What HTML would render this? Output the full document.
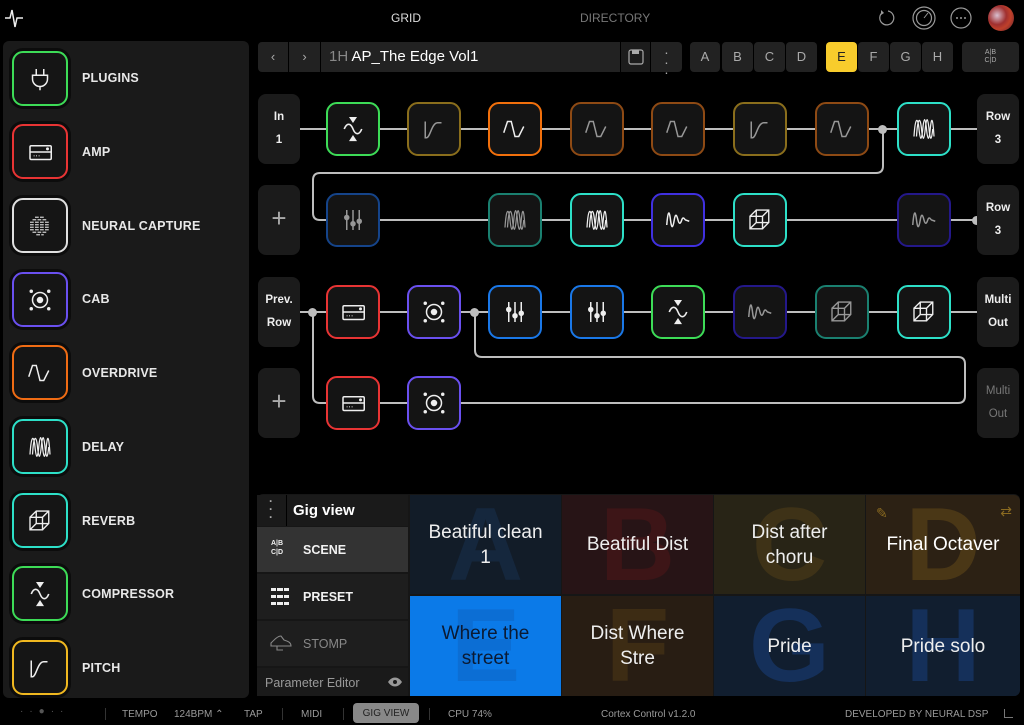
<!DOCTYPE html>
<html><head><meta charset="utf-8">
<style>
*{box-sizing:border-box;margin:0;padding:0}
body{width:1024px;height:721px;background:#000;overflow:hidden;position:relative;font-family:"Liberation Sans",sans-serif;color:#e6e6e6}
.a{position:absolute}
.side{left:3px;top:41px;width:246px;height:657px;background:#1a1a1a;border-radius:6px}
.sb{position:absolute;left:12px;width:56px;height:55px;border-radius:11px;border:2px solid;background:#151515;box-shadow:0 0 0 3px #0c0c0c}
.sb svg,.bk svg{position:absolute;left:50%;top:50%;transform:translate(-50%,-50%)}
.sl{position:absolute;left:82px;font-size:12.5px;font-weight:bold;color:#e8e8e8;letter-spacing:.2px}
.btn{position:absolute;top:42px;height:30px;background:#222;border-radius:4px;color:#aaa;font-size:13px;text-align:center;line-height:30px}
.bk{position:absolute;width:54px;height:54px;border-radius:11px;border:2px solid;background:#141414}
.lbl{position:absolute;width:42px;height:70px;background:#1b1b1b;border-radius:8px;font-size:11.5px;font-weight:bold;text-align:center;color:#eee;line-height:23px;padding-top:12px}
.dot{position:absolute;width:9px;height:9px;border-radius:50%;background:#bdbdbd}
.t{position:absolute;overflow:hidden;text-align:center;display:flex;align-items:center;justify-content:center;font-size:19px;line-height:25px;color:#eee}
.t b{position:absolute;font-size:104px;font-weight:bold;line-height:1;left:0;right:0;top:-2px;text-align:center}
.t span{position:relative}
.gm{position:absolute;left:257px;width:151px;background:#1e1e1e;font-size:12.5px;font-weight:bold}
.st{position:absolute;top:709px;font-size:10px;color:#9a9a9a}
svg{overflow:visible}
</style></head><body>
<svg width="0" height="0" style="position:absolute">
<defs>
<g id="comp" fill="none" stroke="#eee" stroke-width="1.3"><path d="M5 12c2-5 5-5 7 0s5 5 7 0"/><path d="M10 3h4l-2 3z" fill="#eee"/><path d="M10 21h4l-2-3z" fill="#eee"/></g>
<g id="pitch" fill="none" stroke="#eee" stroke-width="1.2"><path d="M5 6v13h1c3 0 4-12 9-12h3"/></g>
<g id="od" fill="none" stroke="#eee" stroke-width="1.2"><path d="M3 15l3-9h3l3 12h3l4-8"/></g>
<g id="dly" fill="none" stroke="#eee" stroke-width="1"><path d="M4 18C5 2 7 2 8 12S10 22 11 12S13 2 14 12S16 22 17 12S19 2 20 18"/><path d="M6 18C7 2 9 2 10 12S12 22 13 12S15 2 16 12S18 22 19 12"/></g>
<g id="rev" fill="none" stroke="#eee" stroke-width="1.1"><path d="M4 9h10v10H4zM4 9l5-5h10v10l-5 5M14 9l5-5M9 4v10h10M9 14l-5 5"/></g>
<g id="eq" fill="none" stroke="#eee" stroke-width="1.2"><path d="M7 4v16M12 4v16M17 4v16"/><circle cx="7" cy="10" r="1.6" fill="#eee"/><circle cx="12" cy="15" r="1.6" fill="#eee"/><circle cx="17" cy="13" r="1.6" fill="#eee"/></g>
<g id="mod" fill="none" stroke="#eee" stroke-width="1.2"><path d="M3 16C4 4 5 4 6 12S8 18 9 12S11 8 12 12S14 15 15 12S17 11 18 12L21 13"/></g>
<g id="amp" fill="none" stroke="#eee" stroke-width="1.2"><rect x="4" y="7" width="17" height="11" rx="1"/><path d="M4 12h17"/><circle cx="18" cy="9.5" r=".6" fill="#eee"/><path d="M7 15h.5M9 15h.5M11 15h.5"/></g>
<g id="cab" fill="none" stroke="#eee" stroke-width="1.2"><circle cx="12" cy="12" r="6"/><circle cx="12" cy="12" r="2" fill="#eee"/><circle cx="5" cy="5" r=".8" fill="#eee"/><circle cx="19" cy="5" r=".8" fill="#eee"/><circle cx="5" cy="19" r=".8" fill="#eee"/><circle cx="19" cy="19" r=".8" fill="#eee"/></g>
<g id="plug" fill="none" stroke="#eee" stroke-width="1.2"><path d="M9 4v5M15 4v5M6 9h12v3a6 6 0 0 1-12 0zM12 18v3"/></g>
<g id="nc" stroke="#ccc" stroke-width="1"><path d="M6 7h12M4 9h16M4 11h16M4 13h16M4 15h16M6 17h12M8 5h8M9 19h6" stroke-dasharray="3 1"/></g>
</defs></svg>

<!-- top bar -->
<svg class="a" style="left:4px;top:6px" width="24" height="24" viewBox="0 0 24 24"><path d="M1 12h5l2-8 3 17 2-9h6" fill="none" stroke="#eee" stroke-width="1.5"/></svg>
<div class="a" style="left:391px;top:11px;font-size:12px;color:#ddd">GRID</div>
<div class="a" style="left:580px;top:11px;font-size:12px;color:#777">DIRECTORY</div>
<svg class="a" style="left:877px;top:8px" width="20" height="20"><path d="M6 4a7 7 0 1 0 5-1" fill="none" stroke="#999" stroke-width="1.2"/><path d="M4 2l3 3-3 2z" fill="#999"/></svg>
<svg class="a" style="left:912px;top:6px" width="24" height="24"><circle cx="12" cy="12" r="11" fill="none" stroke="#999" stroke-width="1.2"/><circle cx="12" cy="12" r="7.5" fill="none" stroke="#999" stroke-width="1.2"/><path d="M12 12l4-5" stroke="#999"/></svg>
<svg class="a" style="left:950px;top:7px" width="22" height="22"><circle cx="11" cy="11" r="10" fill="none" stroke="#999" stroke-width="1.2"/><circle cx="7" cy="11" r="1" fill="#999"/><circle cx="11" cy="11" r="1" fill="#999"/><circle cx="15" cy="11" r="1" fill="#999"/></svg>
<div class="a" style="left:988px;top:5px;width:26px;height:26px;border-radius:50%;background:radial-gradient(circle at 35% 40%,#d9c0d0,#a03030 40%,#c0402a 60%,#502030)"></div>

<!-- sidebar -->
<div class="a side"></div>
<div class="sb" style="top:51px;border-color:#3ddc57"><svg width="30" height="30" viewBox="0 0 24 24"><use href="#plug"/></svg></div><div class="sl" style="top:71px">PLUGINS</div>
<div class="sb" style="top:124px;border-color:#e83434"><svg width="30" height="30" viewBox="0 0 24 24"><use href="#amp"/></svg></div><div class="sl" style="top:145px">AMP</div>
<div class="sb" style="top:198px;border-color:#e0e0e0"><svg width="30" height="30" viewBox="0 0 24 24"><use href="#nc"/></svg></div><div class="sl" style="top:219px">NEURAL CAPTURE</div>
<div class="sb" style="top:272px;border-color:#6a50f0"><svg width="30" height="30" viewBox="0 0 24 24"><use href="#cab"/></svg></div><div class="sl" style="top:292px">CAB</div>
<div class="sb" style="top:345px;border-color:#f06c14"><svg width="30" height="30" viewBox="0 0 24 24"><use href="#od"/></svg></div><div class="sl" style="top:366px">OVERDRIVE</div>
<div class="sb" style="top:419px;border-color:#2de0c8"><svg width="30" height="30" viewBox="0 0 24 24"><use href="#dly"/></svg></div><div class="sl" style="top:440px">DELAY</div>
<div class="sb" style="top:493px;border-color:#2de0c8"><svg width="30" height="30" viewBox="0 0 24 24"><use href="#rev"/></svg></div><div class="sl" style="top:514px">REVERB</div>
<div class="sb" style="top:566px;border-color:#3ddc57"><svg width="30" height="30" viewBox="0 0 24 24"><use href="#comp"/></svg></div><div class="sl" style="top:587px">COMPRESSOR</div>
<div class="sb" style="top:640px;border-color:#f0b820"><svg width="30" height="30" viewBox="0 0 24 24"><use href="#pitch"/></svg></div><div class="sl" style="top:661px">PITCH</div>

<!-- preset bar -->
<div class="btn" style="left:258px;width:30px;border-radius:4px 0 0 4px">&#x2039;</div>
<div class="btn" style="left:289px;width:31px;border-radius:0">&#x203A;</div>
<div class="btn" style="left:321px;width:299px;border-radius:0;text-align:left;padding-left:8px;font-size:15px;color:#fff"><span style="color:#888">1H</span> AP_The Edge Vol1</div>
<div class="btn" style="left:621px;width:29px;border-radius:0;background:#1c1c1c"><svg width="18" height="18" style="margin-top:6px"><rect x="2" y="2" width="14" height="14" rx="2" fill="none" stroke="#aaa" stroke-width="1.2"/><rect x="5" y="2" width="7" height="4" fill="#aaa"/></svg></div>
<div class="btn" style="left:651px;width:31px;border-radius:0 4px 4px 0;line-height:10px;padding-top:5px;font-size:14px">·<br>·<br>·</div>
<div class="btn" style="left:690px;width:30px">A</div>
<div class="btn" style="left:722px;width:31px">B</div>
<div class="btn" style="left:754px;width:31px">C</div>
<div class="btn" style="left:786px;width:31px">D</div>
<div class="btn" style="left:826px;width:31px;background:#f8cc2c;color:#222">E</div>
<div class="btn" style="left:858px;width:31px">F</div>
<div class="btn" style="left:890px;width:31px">G</div>
<div class="btn" style="left:922px;width:31px">H</div>
<div class="btn" style="left:962px;width:57px;font-size:7px;line-height:8px;padding-top:7px">A|B<br>C|D</div>

<!-- lines -->
<svg class="a" style="left:0;top:0" width="1024" height="721"><g fill="none" stroke="#bdbdbd" stroke-width="2">
<path d="M300 129H977"/>
<path d="M883 129V166q0 7-7 7H320q-7 0-7 7V213q0 7 7 7H977"/>
<path d="M300 312H977"/>
<path d="M313 312V396q0 7 7 7H958q7 0 7-7V364q0-7-7-7H482q-7 0-7-7V312"/>
</g></svg>
<div class="dot" style="left:878px;top:125px"></div>
<div class="dot" style="left:972px;top:216px"></div>
<div class="dot" style="left:308px;top:308px"></div>
<div class="dot" style="left:470px;top:308px"></div>

<!-- labels -->
<div class="lbl" style="left:258px;top:94px">In<br>1</div>
<div class="lbl" style="left:977px;top:94px">Row<br>3</div>
<div class="lbl" style="left:258px;top:185px;font-size:26px;font-weight:normal;color:#aaa;padding-top:22px">+</div>
<div class="lbl" style="left:977px;top:185px">Row<br>3</div>
<div class="lbl" style="left:258px;top:277px">Prev.<br>Row</div>
<div class="lbl" style="left:977px;top:277px">Multi<br>Out</div>
<div class="lbl" style="left:258px;top:368px;font-size:26px;font-weight:normal;color:#aaa;padding-top:22px">+</div>
<div class="lbl" style="left:977px;top:368px;color:#777;font-weight:normal">Multi<br>Out</div>

<!-- blocks row1 -->
<div class="bk" style="left:326px;top:102px;border-color:#3ddc57"><svg width="30" height="30" viewBox="0 0 24 24"><use href="#comp"/></svg></div>
<div class="bk" style="left:407px;top:102px;border-color:#8a6e1c"><svg width="30" height="30" viewBox="0 0 24 24" opacity=".6"><use href="#pitch"/></svg></div>
<div class="bk" style="left:488px;top:102px;border-color:#f2700c"><svg width="30" height="30" viewBox="0 0 24 24"><use href="#od"/></svg></div>
<div class="bk" style="left:570px;top:102px;border-color:#8e4a14"><svg width="30" height="30" viewBox="0 0 24 24" opacity=".6"><use href="#od"/></svg></div>
<div class="bk" style="left:651px;top:102px;border-color:#8e4a14"><svg width="30" height="30" viewBox="0 0 24 24" opacity=".6"><use href="#od"/></svg></div>
<div class="bk" style="left:733px;top:102px;border-color:#8a6e1c"><svg width="30" height="30" viewBox="0 0 24 24" opacity=".6"><use href="#pitch"/></svg></div>
<div class="bk" style="left:815px;top:102px;border-color:#8e4a14"><svg width="30" height="30" viewBox="0 0 24 24" opacity=".6"><use href="#od"/></svg></div>
<div class="bk" style="left:897px;top:102px;border-color:#2de0c8"><svg width="30" height="30" viewBox="0 0 24 24"><use href="#dly"/></svg></div>
<!-- row2 -->
<div class="bk" style="left:326px;top:193px;border-color:#15448a"><svg width="30" height="30" viewBox="0 0 24 24" opacity=".6"><use href="#eq"/></svg></div>
<div class="bk" style="left:488px;top:193px;border-color:#1a8070"><svg width="30" height="30" viewBox="0 0 24 24" opacity=".6"><use href="#dly"/></svg></div>
<div class="bk" style="left:570px;top:193px;border-color:#2de0c8"><svg width="30" height="30" viewBox="0 0 24 24"><use href="#dly"/></svg></div>
<div class="bk" style="left:651px;top:193px;border-color:#4030e0"><svg width="30" height="30" viewBox="0 0 24 24"><use href="#mod"/></svg></div>
<div class="bk" style="left:733px;top:193px;border-color:#2de0c8"><svg width="30" height="30" viewBox="0 0 24 24"><use href="#rev"/></svg></div>
<div class="bk" style="left:897px;top:193px;border-color:#24188a"><svg width="30" height="30" viewBox="0 0 24 24" opacity=".6"><use href="#mod"/></svg></div>
<!-- row3 -->
<div class="bk" style="left:326px;top:285px;border-color:#e83434"><svg width="30" height="30" viewBox="0 0 24 24"><use href="#amp"/></svg></div>
<div class="bk" style="left:407px;top:285px;border-color:#6a50f0"><svg width="30" height="30" viewBox="0 0 24 24"><use href="#cab"/></svg></div>
<div class="bk" style="left:488px;top:285px;border-color:#1a78e8"><svg width="30" height="30" viewBox="0 0 24 24"><use href="#eq"/></svg></div>
<div class="bk" style="left:570px;top:285px;border-color:#1a78e8"><svg width="30" height="30" viewBox="0 0 24 24"><use href="#eq"/></svg></div>
<div class="bk" style="left:651px;top:285px;border-color:#3ddc57"><svg width="30" height="30" viewBox="0 0 24 24"><use href="#comp"/></svg></div>
<div class="bk" style="left:733px;top:285px;border-color:#24188a"><svg width="30" height="30" viewBox="0 0 24 24" opacity=".6"><use href="#mod"/></svg></div>
<div class="bk" style="left:815px;top:285px;border-color:#1a8070"><svg width="30" height="30" viewBox="0 0 24 24" opacity=".6"><use href="#rev"/></svg></div>
<div class="bk" style="left:897px;top:285px;border-color:#2de0c8"><svg width="30" height="30" viewBox="0 0 24 24"><use href="#rev"/></svg></div>
<!-- row4 -->
<div class="bk" style="left:326px;top:376px;border-color:#e83434"><svg width="30" height="30" viewBox="0 0 24 24"><use href="#amp"/></svg></div>
<div class="bk" style="left:407px;top:376px;border-color:#6a50f0"><svg width="30" height="30" viewBox="0 0 24 24"><use href="#cab"/></svg></div>

<!-- gig view -->
<div class="a" style="left:257px;top:494px;width:763px;height:202px;background:#161616;border-radius:6px"></div>
<div class="gm" style="top:495px;height:31px;font-size:15px;color:#fff;background:#1a1a1a"><span style="position:absolute;left:12px;top:2px;font-size:12px;line-height:8px;color:#aaa">·<br>·<br>·</span><span style="position:absolute;left:29px;top:0;bottom:0;width:1px;background:#000"></span><span style="position:absolute;left:36px;top:7px">Gig view</span></div>
<div class="gm" style="top:527px;height:45px;background:#333;color:#f2f2f2"><span style="position:absolute;left:14px;top:12px;font-size:7px;line-height:9px">A|B<br>C|D</span><span style="position:absolute;left:46px;top:16px">SCENE</span></div>
<div class="gm" style="top:574px;height:45px;color:#f2f2f2"><svg style="position:absolute;left:14px;top:14px" width="18" height="17"><g fill="#eee"><rect x="0" y="0" width="18" height="3"/><rect x="0" y="7" width="18" height="3"/><rect x="0" y="14" width="18" height="3"/></g><g fill="#1e1e1e"><rect x="5" y="0" width="1" height="17"/><rect x="12" y="0" width="1" height="17"/></g></svg><span style="position:absolute;left:46px;top:16px">PRESET</span></div>
<div class="gm" style="top:621px;height:45px;color:#888"><svg style="position:absolute;left:12px;top:13px" width="24" height="18"><path d="M2 12h20c0-4-4-5-7-6l-3-4c-3 0-6 3-10 7z M8 12v4h6" fill="none" stroke="#888" stroke-width="1.1"/></svg><span style="position:absolute;left:46px;top:16px;font-weight:normal">STOMP</span></div>
<div class="gm" style="top:668px;height:28px;color:#999;font-weight:normal;background:#1a1a1a"><span style="position:absolute;left:8px;top:8px">Parameter Editor</span><svg style="position:absolute;left:130px;top:9px" width="16" height="10"><path d="M1 5c4-6 10-6 14 0c-4 6-10 6-14 0z" fill="#999"/><circle cx="8" cy="5" r="2" fill="#1a1a1a"/></svg></div>

<div class="t" style="left:410px;top:495px;width:151px;height:99px;background:#121c28"><b style="color:#15273d">A</b><span>Beatiful clean<br>1</span></div>
<div class="t" style="left:562px;top:495px;width:151px;height:99px;background:#271416"><b style="color:#3d1517">B</b><span>Beatiful Dist</span></div>
<div class="t" style="left:714px;top:495px;width:151px;height:99px;background:#282416"><b style="color:#3e3217">C</b><span>Dist after<br>choru</span></div>
<div class="t" style="left:866px;top:495px;width:154px;height:99px;background:#2c2114;border-radius:0 6px 0 0"><b style="color:#4a3716">D</b><span style="color:#fff">Final Octaver</span><i style="position:absolute;left:10px;top:6px;color:#8a6a20;font-style:normal;font-size:14px">✎</i><i style="position:absolute;right:8px;top:4px;color:#8a6a20;font-style:normal;font-size:14px">⇄</i></div>
<div class="t" style="left:410px;top:596px;width:151px;height:100px;background:#0b7ae8;color:#0b1a33"><b style="color:#0c6ed4">E</b><span>Where the<br>street</span></div>
<div class="t" style="left:562px;top:596px;width:151px;height:100px;background:#281d13"><b style="color:#3d2c14">F</b><span>Dist Where<br>Stre</span></div>
<div class="t" style="left:714px;top:596px;width:151px;height:100px;background:#111e2f"><b style="color:#15305a">G</b><span>Pride</span></div>
<div class="t" style="left:866px;top:596px;width:154px;height:100px;background:#111e2f;border-radius:0 0 6px 0"><b style="color:#15305a">H</b><span>Pride solo</span></div>

<!-- status -->
<div class="st" style="left:20px;top:706px;color:#555;letter-spacing:6px">··●··</div>
<div class="a" style="left:105px;top:708px;width:1px;height:12px;background:#333"></div>
<div class="st" style="left:122px">TEMPO</div>
<div class="st" style="left:174px">124BPM ⌃</div>
<div class="st" style="left:244px">TAP</div>
<div class="a" style="left:282px;top:708px;width:1px;height:12px;background:#333"></div>
<div class="st" style="left:301px">MIDI</div>
<div class="a" style="left:343px;top:708px;width:1px;height:12px;background:#333"></div>
<div class="a" style="left:353px;top:703px;width:66px;height:20px;background:#888;border-radius:4px;color:#222;font-size:10px;text-align:center;line-height:22px">GIG VIEW</div>
<div class="a" style="left:429px;top:708px;width:1px;height:12px;background:#333"></div>
<div class="st" style="left:448px">CPU 74%</div>
<div class="st" style="left:601px">Cortex Control v1.2.0</div>
<div class="st" style="left:845px">DEVELOPED BY NEURAL DSP</div>
<div class="a" style="left:1004px;top:709px;width:9px;height:9px;border-left:1px solid #777;border-bottom:1px solid #777"></div>
</body></html>
